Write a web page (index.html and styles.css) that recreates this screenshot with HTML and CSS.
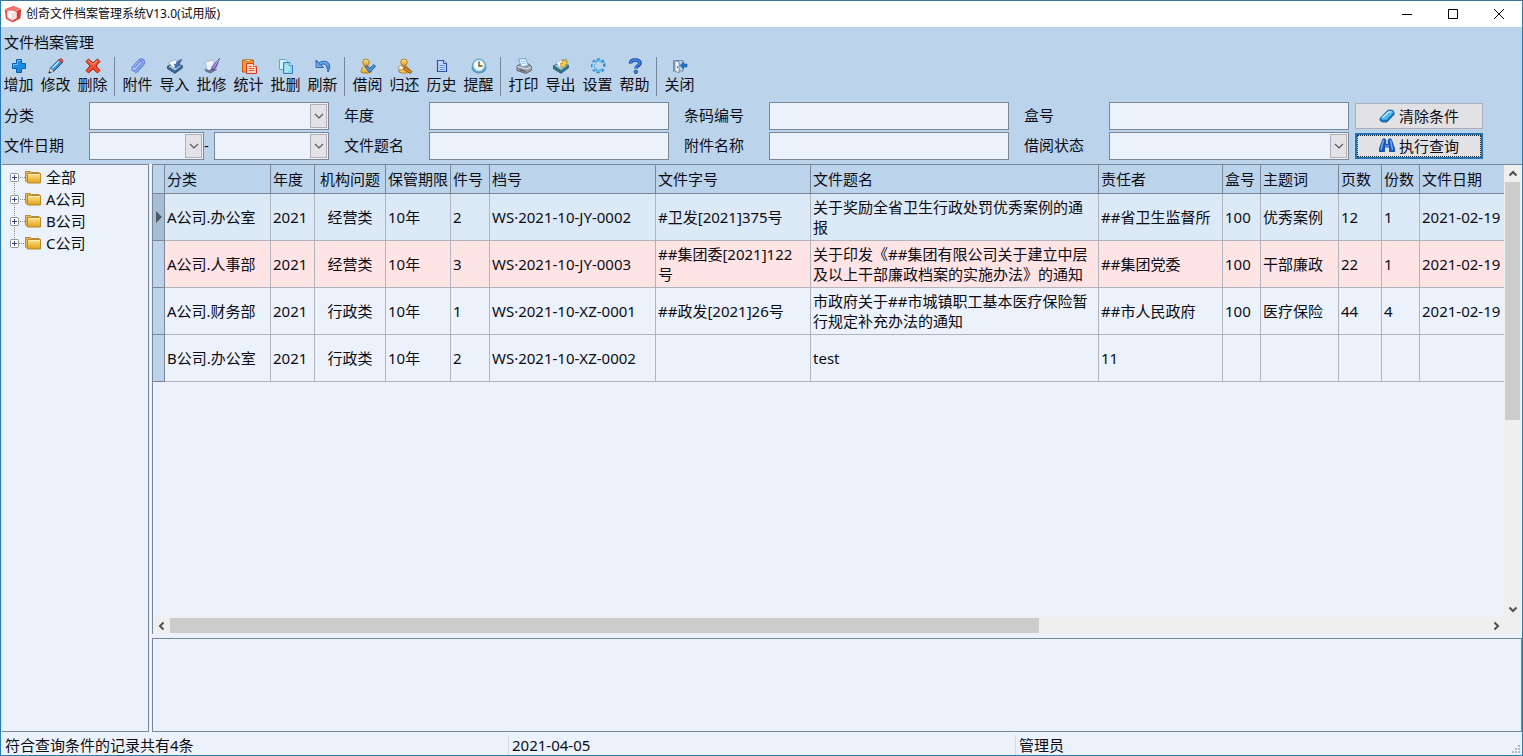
FILE: index.html
```html
<!DOCTYPE html>
<html lang="zh-CN">
<head>
    <meta charset="UTF-8">
    <meta name="viewport" content="width=device-width, initial-scale=1.0">
    <title>创奇文件档案管理系统V13.0(试用版)</title>
    <link rel="stylesheet" href="styles.css">
</head>
<body>
    <!-- 公用图标 -->
    <svg class="sprite" aria-hidden="true">
        <defs>
            <linearGradient id="gBlue" x1="0" y1="0" x2="1" y2="1">
                <stop offset="0" stop-color="#6fd0ff"/>
                <stop offset="1" stop-color="#0a5cb8"/>
            </linearGradient>
            <linearGradient id="gGold" x1="0" y1="0" x2="0" y2="1">
                <stop offset="0" stop-color="#ffe48a"/>
                <stop offset="1" stop-color="#e0a020"/>
            </linearGradient>
        </defs>
        <symbol id="chevron" viewBox="0 0 10 6">
            <path d="M1 1l4 4 4-4" fill="none" stroke="#555" stroke-width="1.1"/>
        </symbol>
        <symbol id="arrow" viewBox="0 0 10 10">
            <path d="M1.500 6.500L5 3l3.500 3.500" fill="none" stroke="#505050" stroke-width="2"/>
        </symbol>
        <symbol id="folder" viewBox="0 0 16 14">
            <path d="M.5 1.500h5l1 1h7.500v10H2L.5 11z" fill="#e3b85a" stroke="#b58a34"/>
            <path d="M2.500 3.500h13v9.500h-13z" fill="url(#gGold)" stroke="#b9892b"/>
            <path d="M3.500 4.500h11" stroke="#fff2b8"/>
        </symbol>
        <symbol id="plusbox" viewBox="0 0 9 9">
            <rect x=".5" y=".5" width="8" height="8" rx="1" fill="#fff" stroke="#919191"/>
            <path d="M2 4.500h5M4.500 2v5" stroke="#33477c"/>
        </symbol>
    </svg>

    <div class="window">
        <header class="titlebar">
            <svg class="logo" viewBox="0 0 18 18">
                <path d="M9.500.8l7.500 3L8.500 7 1 4z" fill="#f0736c"/>
                <path d="M.8 4.200L8.500 7.400v10L1.800 13.800z" fill="#ea4f49"/>
                <path d="M17.200 4L8.500 7.400v10l7.900-4.200z" fill="#dc3a35"/>
                <path d="M3 6.800l5.500 2v6.700L3.600 12.800z" fill="#fff"/>
                <path d="M8.500 8.800l4.300-1.700v5.800l-4.300 2.600z" fill="#f6e2e0"/>
                <path d="M3 6.800l4-1.300 5.800 1.600-4.300 1.700z" fill="#fff"/>
            </svg>
            <h1 class="title">创奇文件档案管理系统V13.0(试用版)</h1>
            <div class="win-buttons">
                <button type="button" aria-label="最小化"><svg viewBox="0 0 12 12"><path d="M1 6.500h10"/></svg></button>
                <button type="button" aria-label="最大化"><svg viewBox="0 0 12 12"><path d="M1.500 1.500h9v9h-9z"/></svg></button>
                <button type="button" aria-label="关闭窗口"><svg viewBox="0 0 12 12"><path d="M1 1l10 10M11 1L1 11"/></svg></button>
            </div>
        </header>

        <div class="menubar">文件档案管理</div>

        <nav class="toolbar">
            <div class="group">
                <button type="button" class="tool">
                    <svg viewBox="0 0 16 16"><path d="M5.500 1.500h5v4h4v5h-4v4h-5v-4h-4v-5h4z" fill="#1b8ae0" stroke="#0b5cae"/><path d="M6.500 2.500h3M6.500 2.500v4h-4v2" fill="none" stroke="#63c2ff"/></svg>
                    <span>增加</span>
                </button>
                <button type="button" class="tool">
                    <svg viewBox="0 0 16 16"><path d="M1 15l1.500-5L11 1.500l3.500 3L6 13z" fill="url(#gBlue)" stroke="#17488c"/><path d="M10.500 2l1.500-1.200c1.500-.6 3.400 1 3 2.600L14 5z" fill="#e2544a" stroke="#93352f" stroke-width=".7"/><path d="M1 15l1.400-4.500 3 2.800z" fill="#f4dfc0"/><path d="M.6 15.500l.8-2.500 1.600 1.600z" fill="#222"/><path d="M4.500 10L11 3.500" stroke="#b9ecff" stroke-width="1.300"/></svg>
                    <span>修改</span>
                </button>
                <button type="button" class="tool">
                    <svg viewBox="0 0 16 16"><path d="M3.500 1L8 5l4.500-4L15 3.500 11 8l4 4.500-2.500 2.500L8 11l-4.500 4L1 12.500 5 8 1 3.500z" fill="#f0502e" stroke="#a91e0e"/><path d="M3.500 2.500L8 6.500l4.500-4" fill="none" stroke="#ffab86"/></svg>
                    <span>删除</span>
                </button>
            </div>
            <div class="separator"></div>
            <div class="group">
                <button type="button" class="tool">
                    <svg viewBox="0 0 16 16"><path d="M4 10l6-6.500c1.500-1.500 3.200.3 2 1.800L6 12c-2 2.200-5.500 0-3.400-3L9 2c2.500-2.500 7 .4 5 4l-6 7c-1 1-2 1.500-3 1.800" fill="none" stroke="#6a86e0" stroke-width="1.500"/><path d="M3 9.500L9.500 2.500" stroke="#c4d4ff" stroke-width=".7"/></svg>
                    <span>附件</span>
                </button>
                <button type="button" class="tool">
                    <svg viewBox="0 0 16 16"><path d="M0 8.500L4 6l11.500 1.500v2.500L8 15.500 0 10.500z" fill="#35688a" stroke="#274f6c" stroke-width=".6"/><path d="M1.500 8.500L8 5.500l6 2.500-6 4.500z" fill="#a9cbe0"/><path d="M1.500 4.500l7-3 3 6-5 2.500z" fill="#f5f9fe" stroke="#8b9ab8" stroke-width=".7"/><path d="M15.500.8L12.800 6l1.200 1-5.500 3.500L6.500 5.500l2 .8c1-3 3.500-4.800 7-5.500z" fill="#4a6ca8"/></svg>
                    <span>导入</span>
                </button>
                <button type="button" class="tool">
                    <svg viewBox="0 0 16 16"><path d="M1 4l8-2 3 9-8 3z" fill="#eef2fb" stroke="#a8b3cc" stroke-width=".8"/><path d="M.5 10.500l4 1.500L9 10.500l4.500 1-7 4-5-2z" fill="#66769c"/><path d="M15.500.5l-3 8-2 2.500-3 1 .6-3.500L12 4z" fill="#7d6cc0" stroke="#51428b" stroke-width=".7"/><path d="M14.500 2L9 10" stroke="#cfc6f4" stroke-width=".8"/></svg>
                    <span>批修</span>
                </button>
                <button type="button" class="tool">
                    <svg viewBox="0 0 16 16"><path d="M1.500 2h11v12h-11z" fill="#f69a3c" stroke="#c4551a"/><path d="M4.500 3.500V1.500h5v2z" fill="#f7e3a4" stroke="#a97224" stroke-width=".8"/><path d="M5.500 5.500h7l3 3v7h-10z" fill="#ffd7c4" stroke="#d23b22"/><path d="M12.500 5.500v3h3" fill="#fff" stroke="#d23b22" stroke-width=".8"/><path d="M7.500 8.500h3M7.500 10.500h6M7.500 12.500h6" stroke="#e2593a"/></svg>
                    <span>统计</span>
                </button>
                <button type="button" class="tool">
                    <svg viewBox="0 0 16 16"><path d="M1.500 1.500h6l2 2v8h-8z" fill="#d5f1f8" stroke="#5fa7cb"/><path d="M5.500 4.500h6l3 3v8h-9z" fill="#8fd6ec" stroke="#367fbf"/><path d="M11.500 4.500v3h3" fill="#fff" stroke="#367fbf" stroke-width=".8"/><path d="M7 7.500h3M7 9.500h5M7 11.500h5M7 13.500h3" stroke="#c9f1fb"/></svg>
                    <span>批删</span>
                </button>
                <button type="button" class="tool">
                    <svg viewBox="0 0 16 16"><path d="M1 2v7.500h7.500L6 7c2.500-2 6-1.500 7 7 3-5.500 1.800-9-1.500-10.300C8.500 2.600 6 3.200 4 5z" fill="#5294e2" stroke="#235ba8" stroke-width=".9"/><path d="M2 4.500v4h4M5 5.800c3-2 6-1.800 8 1.200" fill="none" stroke="#8fc0f5" stroke-width=".8"/></svg>
                    <span>刷新</span>
                </button>
            </div>
            <div class="separator"></div>
            <div class="group">
                <button type="button" class="tool">
                    <svg viewBox="0 0 16 16"><path d="M1 14c0-3.500 1.500-5.500 4.500-6h2c3 .5 4 3 4 6-3 1.500-7.500 1.500-10.500 0z" fill="url(#gGold)" stroke="#a46c16" stroke-width=".8"/><circle cx="6" cy="4.300" r="3.300" fill="url(#gGold)" stroke="#a46c16" stroke-width=".8"/><path d="M5 9l2-1 2.500 2.500L14 6.500l1.500 2-6 6z" fill="#4c8fd8" stroke="#205291" stroke-width=".8"/></svg>
                    <span>借阅</span>
                </button>
                <button type="button" class="tool">
                    <svg viewBox="0 0 16 16"><path d="M2 14c-.5-3.500 1.500-5.500 4-6h2c3 .5 4.500 3 5 6-3 1.500-8 1.500-11 0z" fill="#f2c45a" stroke="#a46c16" stroke-width=".8"/><circle cx="7" cy="4.300" r="3.300" fill="url(#gGold)" stroke="#a46c16" stroke-width=".8"/><path d="M1 9l3-1.500 4 3-5 1.500z" fill="#fff3d0" stroke="#8a6a32" stroke-width=".6"/><path d="M8 8.500l7 5-1.500 2-7-4z" fill="#d98a2c" stroke="#85480f" stroke-width=".8"/></svg>
                    <span>归还</span>
                </button>
                <button type="button" class="tool">
                    <svg viewBox="0 0 16 16"><path d="M3.500 2.500h6l3 3v8H3.500z" fill="#c4d8fb" stroke="#2a51ae" stroke-width="1.200"/><path d="M9.500 2.500v3h3" fill="#fff" stroke="#2a51ae"/><path d="M5.500 7.500h5M5.500 9.500h5M5.500 11.500h5" stroke="#6d92dc"/></svg>
                    <span>历史</span>
                </button>
                <button type="button" class="tool">
                    <svg viewBox="0 0 16 16"><ellipse cx="8" cy="9.500" rx="7.500" ry="6" fill="#4b99c0"/><circle cx="8" cy="7.500" r="6.500" fill="#a9d8ea" stroke="#5c9cbd"/><circle cx="8" cy="7.300" r="4.800" fill="#f6fcf0"/><path d="M8 3.500v4.500h3.500" fill="none" stroke="#6b5428" stroke-width="1.400"/></svg>
                    <span>提醒</span>
                </button>
            </div>
            <div class="separator"></div>
            <div class="group">
                <button type="button" class="tool">
                    <svg viewBox="0 0 16 16"><path d="M1 8l4-2h8l3 3v3l-6 3.500-9-3z" fill="#9b9da6" stroke="#4c4e58" stroke-width=".8"/><path d="M1.500 8.500l9 2.500L15 9" fill="none" stroke="#e7e8ee"/><path d="M2.500 1l7-.5 3 7-7 1.500z" fill="#e4f5ff" stroke="#4c91c8" stroke-width=".8"/><path d="M5 3.500l4-.5M6 5.500l4-.5" stroke="#8cc4ec"/><path d="M3.500 11.500l6 2" stroke="#44464e"/></svg>
                    <span>打印</span>
                </button>
                <button type="button" class="tool">
                    <svg viewBox="0 0 16 16"><path d="M0 8l4-2 11.500 1v3L8 15.500 0 10.500z" fill="#36718a" stroke="#24506a" stroke-width=".6"/><path d="M1.500 7.500L8 5l6.500 2.500L8 12z" fill="#a5cdd8"/><path d="M3 4.500l6-2.500 3 5-5 3z" fill="#f8fbff" stroke="#8a9eb4" stroke-width=".6"/><path d="M8 9.500L7.500 5l1.500 1c0-2 .5-3.500 1-5l1 2 2-2.500v3l2-.5-2.500 4 1 1z" fill="#f5ce42" stroke="#a67a12" stroke-width=".6"/></svg>
                    <span>导出</span>
                </button>
                <button type="button" class="tool">
                    <svg viewBox="0 0 16 16"><path d="M13.500 4.500A6 6 0 1 0 13.500 11" fill="none" stroke="#3889c5" stroke-width="3" stroke-dasharray="2.700 1.800"/><path d="M12 4A5 5 0 1 0 12 11.500" fill="none" stroke="#62b4e6" stroke-width="2.600"/><path d="M13 6l2.500-1v4L13 8.500z" fill="#3889c5"/><path d="M4 11.500c-1.500-2.500-1-5.500 1-7" fill="none" stroke="#c4eaff" stroke-width="1.200"/></svg>
                    <span>设置</span>
                </button>
                <button type="button" class="tool">
                    <svg viewBox="0 0 16 16"><path d="M3.500 5.500C3.500 2.800 5.500 2 8.300 2s4.700 1 4.700 3.300c0 2.200-4 2.500-4 5.200" fill="none" stroke="#153f91" stroke-width="3.600"/><circle cx="8.800" cy="13.800" r="2.100" fill="#153f91"/><path d="M3.500 5C3.700 3 5.500 2 8.300 2s4.500 1 4.500 3c0 2-4 2.600-4 5" fill="none" stroke="#3d84e6" stroke-width="2"/><circle cx="8.700" cy="13.700" r="1.300" fill="#3d84e6"/></svg>
                    <span>帮助</span>
                </button>
            </div>
            <div class="separator"></div>
            <div class="group">
                <button type="button" class="tool">
                    <svg viewBox="0 0 16 16"><path d="M1.500 2v12M11 2.500H3v10.500h8v-3M11 2.500v3" fill="none" stroke="#7a8aa6"/><path d="M3 2.500l4 1.500v11l-4-2z" fill="#f4f8ff" stroke="#6a7996" stroke-width=".8"/><path d="M5.500 8.500v1.500" stroke="#444"/><path d="M8 7.500l3.500-3.500v2H15v3h-3.500v2z" fill="#2377cf" stroke="#125199" stroke-width=".6"/></svg>
                    <span>关闭</span>
                </button>
            </div>
        </nav>

        <form class="filters">
            <div class="fields">
                <div class="field">
                    <label for="category">分类</label>
                    <div class="select"><select id="category"><option></option></select><span class="drop"><svg><use href="#chevron"/></svg></span></div>
                </div>
                <div class="field"><label for="year">年度</label><input type="text" id="year"></div>
                <div class="field"><label for="barcode">条码编号</label><input type="text" id="barcode"></div>
                <div class="field"><label for="box">盒号</label><input type="text" id="box"></div>
                <div class="field">
                    <label for="dateFrom">文件日期</label>
                    <div class="range">
                        <div class="select"><select id="dateFrom"><option></option></select><span class="drop"><svg><use href="#chevron"/></svg></span></div>
                        <label class="dash" for="dateTo">-</label>
                        <div class="select"><select id="dateTo"><option></option></select><span class="drop"><svg><use href="#chevron"/></svg></span></div>
                    </div>
                </div>
                <div class="field"><label for="docTitle">文件题名</label><input type="text" id="docTitle"></div>
                <div class="field"><label for="attachment">附件名称</label><input type="text" id="attachment"></div>
                <div class="field">
                    <label for="loan">借阅状态</label>
                    <div class="select"><select id="loan"><option></option></select><span class="drop"><svg><use href="#chevron"/></svg></span></div>
                </div>
            </div>
            <div class="actions">
                <button type="reset" class="action">
                    <svg viewBox="0 0 16 16"><path d="M1 10.500L8 3l1.500-.8h4L15 4v2.500L8 14H3.500L1 12.500z" fill="#1878c0" stroke="#0f4f8c" stroke-width=".8"/><path d="M1.800 10.500L9 3h4.300L14.500 4.500l-7 7.200H3z" fill="#4fbcec"/><path d="M3.500 9.500L9.500 4h3" fill="none" stroke="#d0f4ff" stroke-width="1.200"/></svg>
                    清除条件
                </button>
                <button type="button" class="action primary">
                    <svg viewBox="0 0 16 16"><path d="M3 2l1-1.500h2L7.200 2v4h1.600V2L10 .5h2L13 2l3 8.500v3.500h-6V9.500H6V14H0v-3.500z" fill="#1c56b4"/><path d="M4.500 2L2 12M11.500 2l2 10" stroke="#6ea9f4" stroke-width="1.500"/><path d="M6 7h4v2H6z" fill="#4a8de0"/></svg>
                    执行查询
                </button>
            </div>
        </form>

        <main class="workspace">
            <ul class="tree">
                <li><svg class="plus"><use href="#plusbox"/></svg><svg class="folder"><use href="#folder"/></svg>全部</li>
                <li><svg class="plus"><use href="#plusbox"/></svg><svg class="folder"><use href="#folder"/></svg>A公司</li>
                <li><svg class="plus"><use href="#plusbox"/></svg><svg class="folder"><use href="#folder"/></svg>B公司</li>
                <li><svg class="plus"><use href="#plusbox"/></svg><svg class="folder"><use href="#folder"/></svg>C公司</li>
            </ul>

            <div class="right">
                <section class="grid">
                    <div class="grid-view">
                        <table>
                            <colgroup>
                                <col class="w-mark"><col class="w-category"><col class="w-year"><col class="w-issue"><col class="w-term"><col class="w-num"><col class="w-code"><col class="w-docno"><col class="w-title"><col class="w-owner"><col class="w-box"><col class="w-topic"><col class="w-pages"><col class="w-copies"><col class="w-date">
                            </colgroup>
                            <thead>
                                <tr>
                                    <th></th><th>分类</th><th>年度</th><th class="center">机构问题</th><th>保管期限</th><th>件号</th><th>档号</th><th>文件字号</th><th>文件题名</th><th>责任者</th><th>盒号</th><th>主题词</th><th>页数</th><th>份数</th><th>文件日期</th>
                                </tr>
                            </thead>
                            <tbody>
                                <tr class="current">
                                    <td class="mark"><svg viewBox="0 0 6 12"><path d="M0 0l6 6-6 6z" fill="#4d5966"/></svg></td><td>A公司.办公室</td><td>2021</td><td class="center">经营类</td><td>10年</td><td>2</td><td>WS·2021-10-JY-0002</td><td>#卫发[2021]375号</td><td>关于奖励全省卫生行政处罚优秀案例的通报</td><td>##省卫生监督所</td><td>100</td><td>优秀案例</td><td>12</td><td>1</td><td>2021-02-19</td>
                                </tr>
                                <tr class="alert">
                                    <td class="mark"></td><td>A公司.人事部</td><td>2021</td><td class="center">经营类</td><td>10年</td><td>3</td><td>WS·2021-10-JY-0003</td><td>##集团委[2021]122号</td><td>关于印发《##集团有限公司关于建立中层及以上干部廉政档案的实施办法》的通知</td><td>##集团党委</td><td>100</td><td>干部廉政</td><td>22</td><td>1</td><td>2021-02-19</td>
                                </tr>
                                <tr>
                                    <td class="mark"></td><td>A公司.财务部</td><td>2021</td><td class="center">行政类</td><td>10年</td><td>1</td><td>WS·2021-10-XZ-0001</td><td>##政发[2021]26号</td><td>市政府关于##市城镇职工基本医疗保险暂行规定补充办法的通知</td><td>##市人民政府</td><td>100</td><td>医疗保险</td><td>44</td><td>4</td><td>2021-02-19</td>
                                </tr>
                                <tr>
                                    <td class="mark"></td><td>B公司.办公室</td><td>2021</td><td class="center">行政类</td><td>10年</td><td>2</td><td>WS·2021-10-XZ-0002</td><td></td><td>test</td><td>11</td><td></td><td></td><td></td><td></td><td></td>
                                </tr>
                            </tbody>
                        </table>
                    </div>
                    <div class="scroll vertical">
                        <button type="button" aria-label="向上滚动"><svg class="up"><use href="#arrow"/></svg></button>
                        <div class="track"><div class="thumb"></div></div>
                        <button type="button" aria-label="向下滚动"><svg class="down"><use href="#arrow"/></svg></button>
                    </div>
                    <div class="scroll horizontal">
                        <button type="button" aria-label="向左滚动"><svg class="left"><use href="#arrow"/></svg></button>
                        <div class="track"><div class="thumb"></div></div>
                        <button type="button" aria-label="向右滚动"><svg class="to-right"><use href="#arrow"/></svg></button>
                    </div>
                    <div class="corner"></div>
                </section>
                <section class="detail"></section>
            </div>
        </main>

        <footer class="statusbar">
            <div>符合查询条件的记录共有4条</div>
            <div>2021-04-05</div>
            <div>管理员</div>
            <svg class="grip" viewBox="0 0 9 9"><path d="M6 0h2v2H6zM3 3h2v2H3zM6 3h2v2H6zM0 6h2v2H0zM3 6h2v2H3zM6 6h2v2H6z" fill="#b4b8c0"/></svg>
        </footer>
    </div>
</body>
</html>
```

FILE: styles.css
```css
:root {
    --bar: #bcd4eb;
    --panel: #ebf2fc;
    --line: #7c8795;
    --cell: #b0b4bd;
    --text: #0c0c14;
}

* {
    margin: 0;
    padding: 0;
    box-sizing: border-box;
}

body {
    font-family: "Noto Sans", "Noto Sans CJK SC", sans-serif;
    font-size: 15px;
    line-height: 20px;
    color: var(--text);
    overflow: hidden;
}

button,
input,
select {
    font: inherit;
    color: inherit;
}

button {
    border: none;
    background: none;
}

.sprite {
    position: absolute;
    width: 0;
    height: 0;
}

.window {
    display: flex;
    flex-direction: column;
    height: 100vh;
    border: 1px solid #2a7ab5;
    border-top-color: #39749c;
    background: var(--bar);
}

/* 标题栏 */
.titlebar {
    display: flex;
    align-items: center;
    height: 26px;
    padding-left: 3px;
    background: #fff;
    flex: none;
}

.logo {
    width: 18px;
    height: 18px;
    margin-right: 4px;
}

.title {
    flex: 1;
    font-size: 12px;
    font-weight: 400;
}

.win-buttons {
    display: flex;
}

.win-buttons button {
    display: grid;
    place-items: center;
    width: 46px;
    height: 26px;
}

.win-buttons svg {
    width: 12px;
    height: 12px;
    fill: none;
    stroke: #000;
}

.menubar {
    padding: 5px 3px 3px;
    flex: none;
}

/* 工具栏 */
.toolbar {
    display: flex;
    height: 47px;
    flex: none;
}

.group {
    display: flex;
}

.tool {
    display: flex;
    flex-direction: column;
    align-items: center;
    width: 37px;
    padding: 3px 2px 0 0;
    white-space: nowrap;
}

.tool svg {
    width: 16px;
    height: 16px;
}

.separator {
    width: 1px;
    height: 39px;
    margin: 2px 5px 0 2px;
    background: #76879a;
}

/* 查询条件 */
.filters {
    display: flex;
    gap: 6px;
    padding: 0 3px 4px;
    flex: none;
}

.fields {
    display: grid;
    grid-template-columns: repeat(4, minmax(0, 325px));
    gap: 2px 15px;
}

.field {
    display: flex;
    align-items: center;
    height: 28px;
}

.field > label {
    width: 85px;
    padding-bottom: 2px;
    flex: none;
}

.field input,
.select {
    flex: 1;
    min-width: 0;
    height: 28px;
}

.field input,
.field select {
    border: 1px solid var(--line);
    background: var(--panel);
    outline: none;
}

.select {
    position: relative;
}

.select select {
    width: 100%;
    height: 28px;
    appearance: none;
}

.drop {
    position: absolute;
    top: 2px;
    right: 2px;
    bottom: 2px;
    display: grid;
    place-items: center;
    width: 17px;
    border: 1px solid #b0b0b6;
    background: #e4e2e6;
    pointer-events: none;
}

.drop svg {
    width: 10px;
    height: 6px;
}

.range {
    display: flex;
    align-items: center;
    flex: 1;
}

.dash {
    width: 10px;
    padding-bottom: 2px;
}

.actions {
    display: flex;
    flex-direction: column;
    gap: 4px;
    padding-top: 1px;
    width: 128px;
    flex: none;
}

.action {
    display: flex;
    align-items: center;
    justify-content: center;
    gap: 4px;
    height: 26px;
    border: 1px solid #acb0b8;
    background: #e2e1e4;
    white-space: nowrap;
}

.action svg {
    width: 16px;
    height: 16px;
}

.action.primary {
    border: 2px solid #2271b3;
    outline: 1px dotted #222;
    outline-offset: -3px;
}

/* 主区域 */
.workspace {
    display: flex;
    gap: 3px;
    flex: 1;
    min-height: 0;
    background: var(--panel);
}

.tree {
    width: 148px;
    padding: 1px 0 0 8px;
    border: 1px solid var(--line);
    border-left-color: #dfe8f2;
    background: var(--panel);
    list-style: none;
    flex: none;
}

.tree li {
    position: relative;
    display: flex;
    align-items: center;
    height: 22px;
}

.tree li::before {
    content: "";
    position: absolute;
    left: 4px;
    top: 11px;
    width: 12px;
    height: 22px;
    border-left: 1px dotted #8c8c8c;
    border-top: 1px dotted #8c8c8c;
}

.tree li:last-child::before {
    height: 1px;
    border-left: none;
}

.plus {
    position: relative;
    width: 9px;
    height: 9px;
    margin-right: 6px;
}

.folder {
    position: relative;
    width: 16px;
    height: 14px;
    margin-right: 5px;
}

.right {
    display: flex;
    flex-direction: column;
    gap: 4px;
    flex: 1;
    min-width: 0;
}

.grid {
    display: grid;
    grid-template: minmax(0, 1fr) 17px / minmax(0, 1fr) 17px;
    flex: 1;
    min-height: 0;
    padding-right: 1px;
    border: 1px solid var(--line);
    border-right: none;
    border-bottom: none;
}

.grid-view {
    overflow: hidden;
}

table {
    table-layout: fixed;
    width: 0;
    border-collapse: separate;
    border-spacing: 0;
}

.w-mark { width: 12px; }
.w-category { width: 106px; }
.w-year { width: 44px; }
.w-issue { width: 71px; }
.w-term { width: 65px; }
.w-num { width: 39px; }
.w-code { width: 166px; }
.w-docno { width: 155px; }
.w-title { width: 288px; }
.w-owner { width: 124px; }
.w-box { width: 38px; }
.w-topic { width: 78px; }
.w-pages { width: 43px; }
.w-copies { width: 38px; }
.w-date { width: 110px; }

th,
td {
    padding: 0 5px 0 2px;
    border-right: 1px solid var(--cell);
    border-bottom: 1px solid var(--cell);
    text-align: left;
    vertical-align: middle;
}

th {
    height: 29px;
    border-color: var(--line);
    background: var(--bar);
    font-weight: 400;
    white-space: nowrap;
}

td {
    height: 47px;
    word-break: break-all;
}

th.center,
td.center {
    padding: 0;
    text-align: center;
}

td.mark {
    padding: 0 0 0 3px;
    border-color: var(--line);
    background: var(--bar);
}

.mark svg {
    display: block;
    width: 6px;
    height: 12px;
}

.current td {
    background: #dce9f6;
}

.current td.mark {
    background: #a6bdd3;
}

.alert td:not(.mark) {
    background: #ffe4e6;
}

/* 滚动条 */
.scroll {
    display: flex;
    background: #f0eff0;
}

.scroll button {
    display: grid;
    place-items: center;
    width: 17px;
    height: 17px;
    flex: none;
}

.scroll svg {
    width: 10px;
    height: 10px;
}

.vertical {
    flex-direction: column;
}

.track {
    flex: 1;
}

.thumb {
    background: #cdcccd;
}

.vertical .thumb {
    width: 15px;
    height: 57%;
    margin-left: 1px;
}

.horizontal .thumb {
    width: 66%;
    height: 15px;
    margin-top: 1px;
}

.down {
    transform: rotate(180deg);
}

.left {
    transform: rotate(-90deg);
}

.to-right {
    transform: rotate(90deg);
}

.corner {
    background: #f0eff0;
}

.detail {
    height: 94px;
    border: 1px solid var(--line);
    flex: none;
}

/* 状态栏 */
.statusbar {
    position: relative;
    display: grid;
    grid-template-columns: 1fr 1fr 1fr;
    height: 23px;
    padding-top: 3px;
    background: var(--panel);
    flex: none;
}

.statusbar div {
    padding-left: 3px;
    border-left: 1px solid #d4dae4;
}

.statusbar div:first-child {
    border-left-color: transparent;
}

.grip {
    position: absolute;
    right: 1px;
    bottom: 1px;
    width: 9px;
    height: 9px;
}
```
